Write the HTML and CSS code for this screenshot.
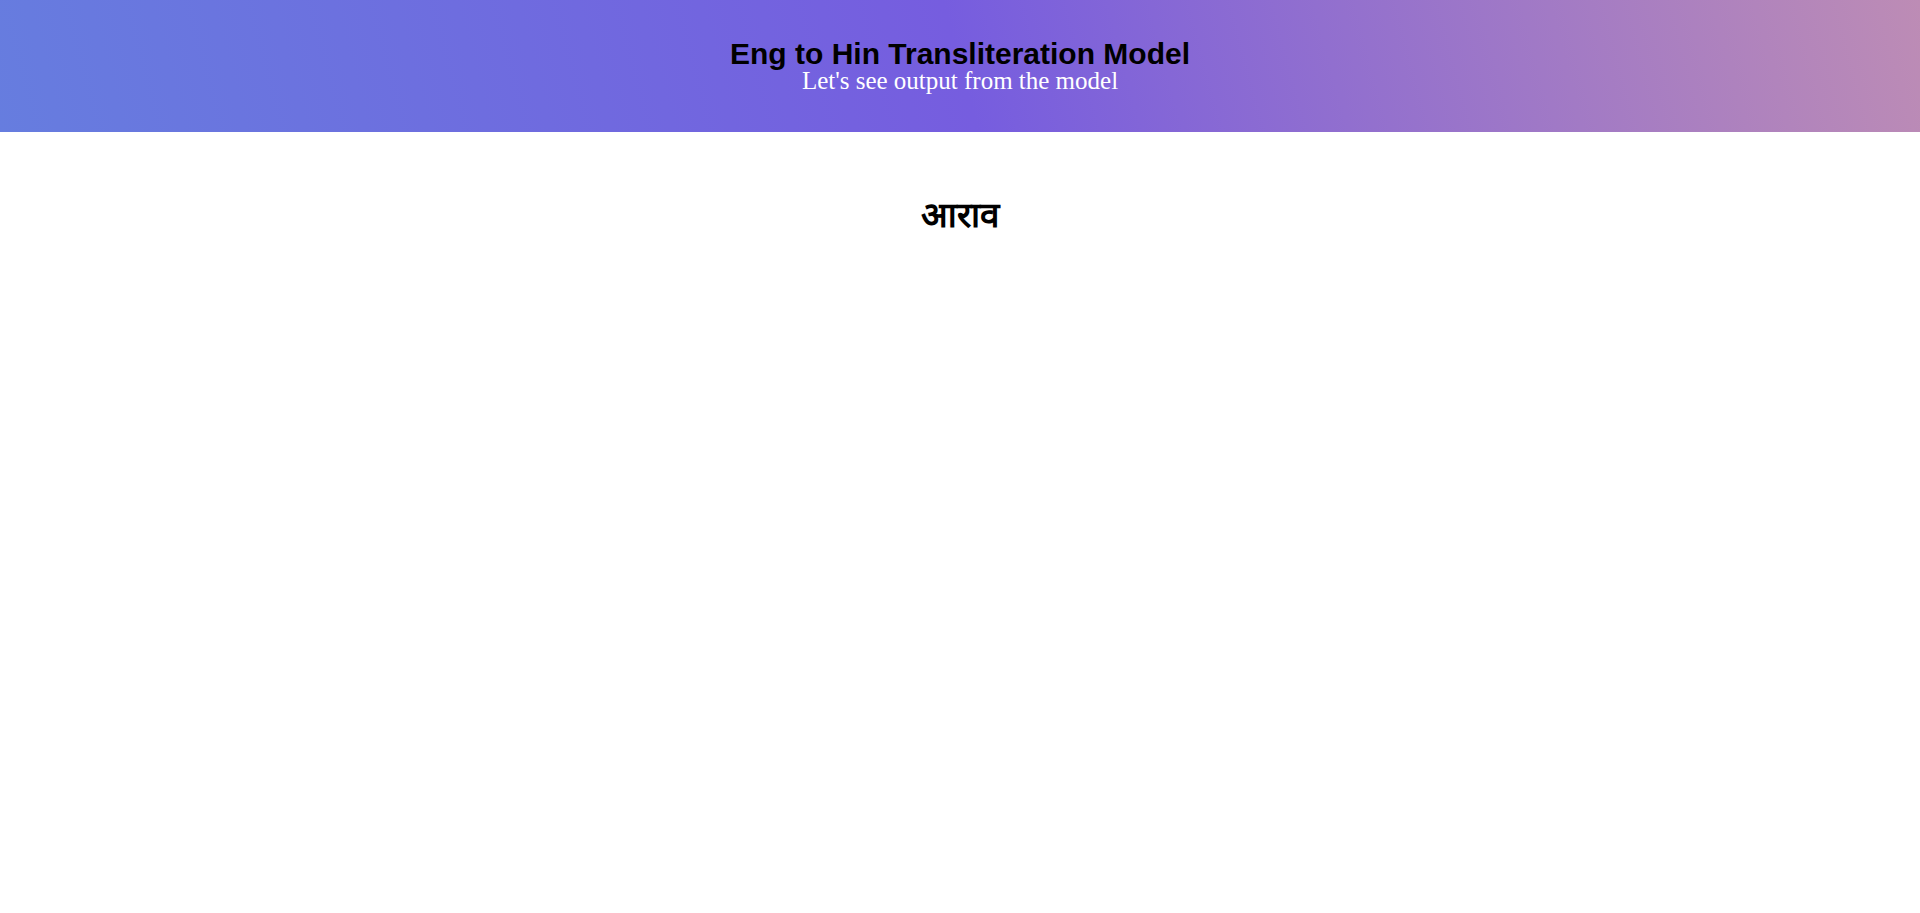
FILE: index.html
```html
<!DOCTYPE html>
<html lang="en">
<head>
<meta charset="utf-8">
<title>Eng to Hin Transliteration Model</title>
<link rel="stylesheet" href="styles.css">
</head>
<body>
<header class="hero">
  <h1 class="hero-title">Eng to Hin Transliteration Model</h1>
  <p class="hero-subtitle">Let's see output from the model</p>
</header>
<main class="result">
  <h2 class="result-word">आराव</h2>
</main>
</body>
</html>
```

FILE: styles.css
```css
html, body {
  margin: 0;
  padding: 0;
  background: #ffffff;
}

body {
  font-family: "Liberation Serif", "Times New Roman", serif;
}

.hero {
  height: 132px;
  box-sizing: border-box;
  padding-top: 39px;
  display: flex;
  flex-direction: column;
  align-items: center;
  background: linear-gradient(75deg, #667ddf 0%, #765ddf 50%, #bd8cb5 100%);
}

.hero-title {
  margin: 0;
  font-family: "Liberation Sans", Arial, sans-serif;
  font-size: 30px;
  font-weight: 700;
  line-height: 30px;
  color: #000000;
}

.hero-subtitle {
  margin: 0;
  font-family: "Liberation Serif", "Times New Roman", serif;
  font-size: 25px;
  line-height: 23px;
  color: #ffffff;
}

.result {
  display: flex;
  justify-content: center;
  padding-top: 64px;
}

.result-word {
  margin: 0;
  font-family: "Liberation Serif", "Times New Roman", serif;
  font-size: 35px;
  font-weight: 700;
  line-height: 40px;
  color: #000000;
}
```
